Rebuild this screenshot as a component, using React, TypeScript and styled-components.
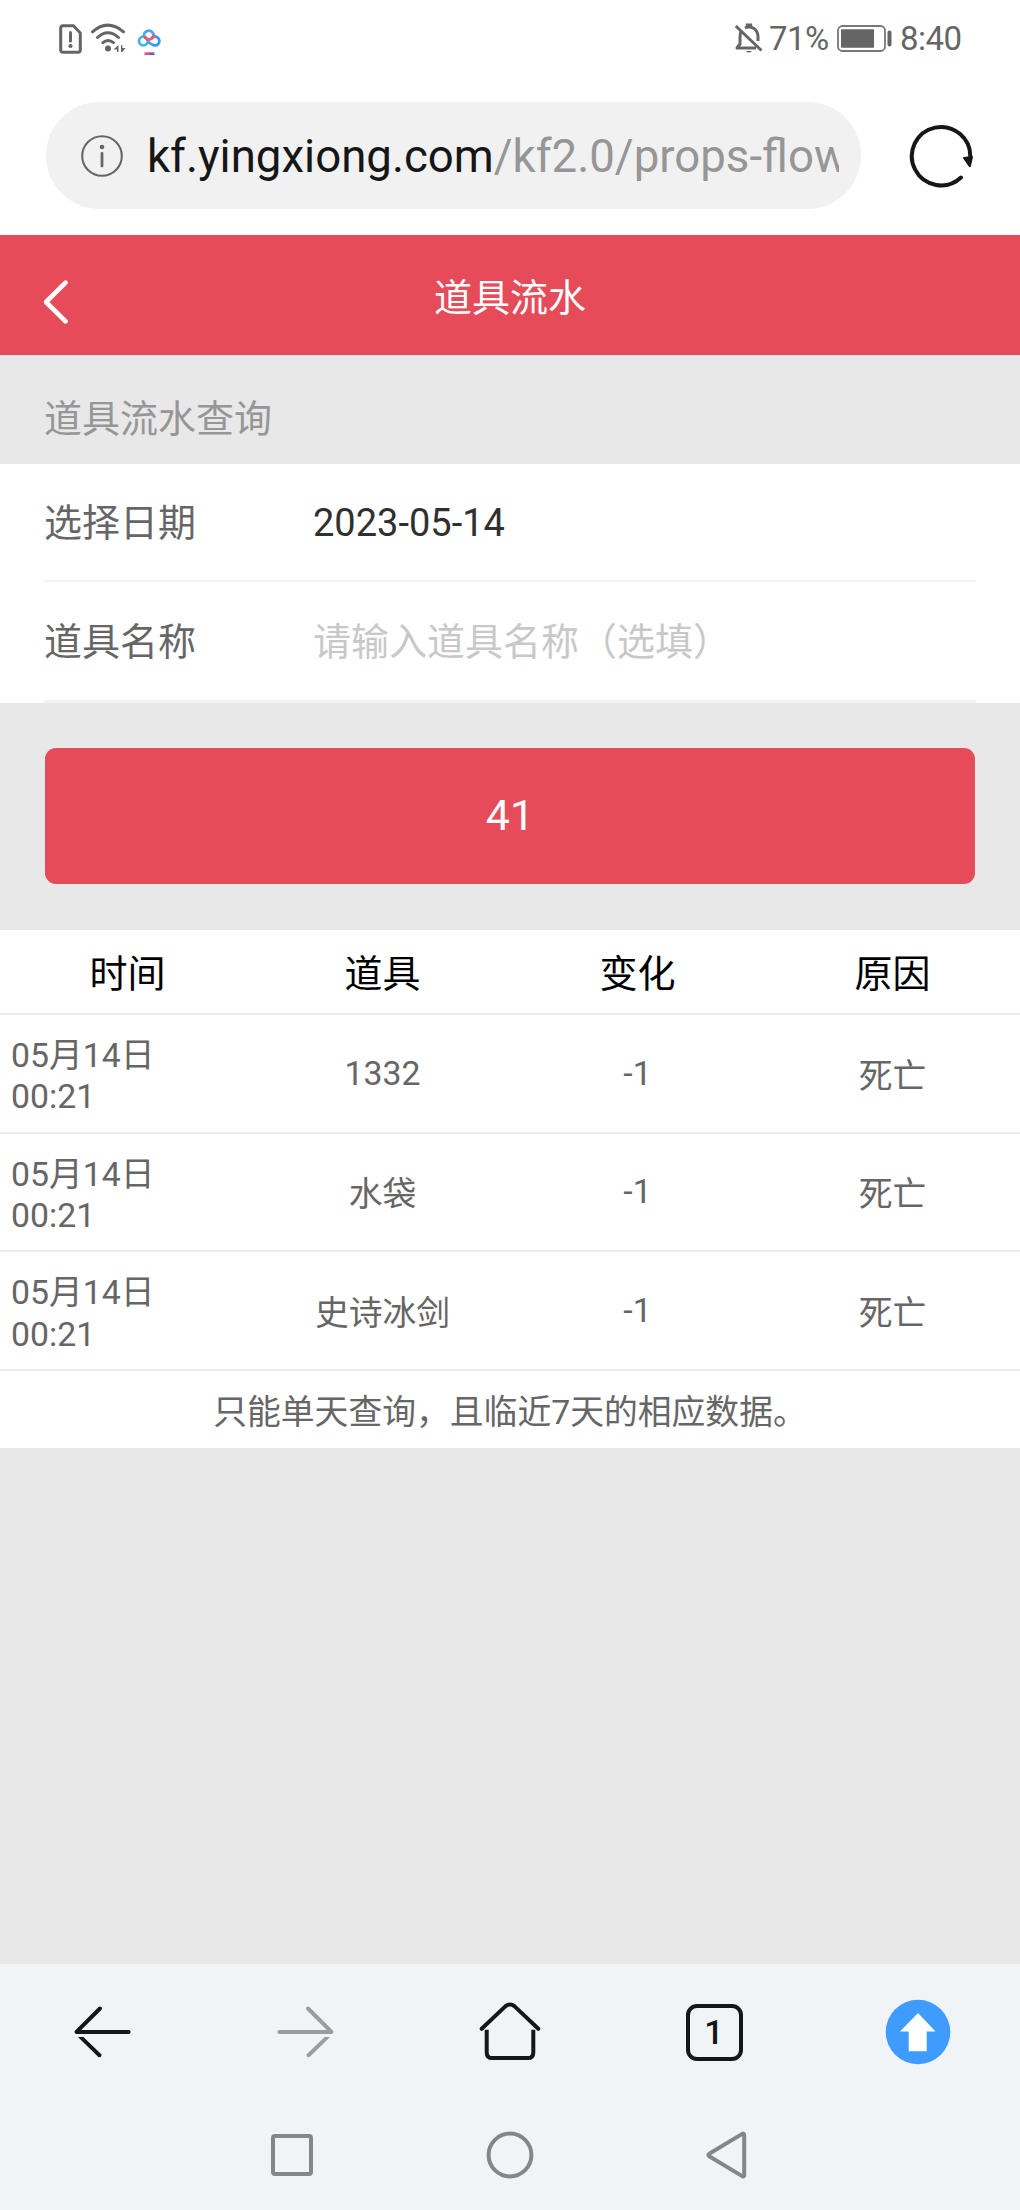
import React from "react";
import styled, { createGlobalStyle } from "styled-components";

const GlobalStyle = createGlobalStyle`
  *, *::before, *::after { box-sizing: border-box; }
  body {
    margin: 0;
    background: #e8e8e8;
    font-family: Roboto, "Noto Sans CJK SC", sans-serif;
    font-weight: 400;
  }
`;

const RED = "#e64b5a";

const Screen = styled.div`
  width: 1020px;
  height: 2210px;
  display: flex;
  flex-direction: column;
  overflow: hidden;
  background: #e8e8e8;
`;

const StatusBar = styled.header`
  height: 77px;
  padding: 0 59px;
  display: flex;
  justify-content: space-between;
  background: #fff;
  color: #656565;
  font-size: 33px;
  line-height: 77px;
`;

const StatusGroup = styled.div`
  display: flex;
  align-items: center;

  svg { flex: none; display: block; }
`;

const StatusText = styled.span<{ $width: number }>`
  width: ${(p) => p.$width}px;
  white-space: nowrap;
  letter-spacing: -0.5px;
`;

const AddressBar = styled.div`
  height: 158px;
  padding: 25px 45px 0 46px;
  display: flex;
  align-items: flex-start;
  justify-content: space-between;
  background: #fff;
`;

const AddressField = styled.div`
  width: 815px;
  height: 107px;
  padding: 0 22px 0 35px;
  display: flex;
  align-items: center;
  gap: 24px;
  border-radius: 54px;
  background: #f1f1f1;

  svg { flex: none; display: block; }
`;

const Url = styled.div`
  flex: 1;
  min-width: 0;
  overflow: hidden;
  white-space: nowrap;
  padding-top: 3px;
  font-size: 45.6px;
  line-height: 70px;
  color: #969696;
`;

const Host = styled.span`
  color: #161616;
`;

const ReloadButton = styled.button`
  width: 68px;
  height: 107px;
  padding: 0;
  border: 0;
  background: none;
  display: flex;
  align-items: center;
  justify-content: center;
`;

const TitleBar = styled.div`
  height: 120px;
  padding: 0 40px;
  display: grid;
  grid-template-columns: 60px 1fr 60px;
  align-items: center;
  background: ${RED};
  color: #fff;
`;

const BackButton = styled.button`
  padding: 14px 0 0;
  border: 0;
  background: none;
  display: flex;
`;

const PageTitle = styled.h1`
  margin: 0;
  padding-top: 6px;
  text-align: center;
  font-size: 38px;
  font-weight: 400;
  line-height: 50px;
`;

const SectionTitle = styled.h2`
  height: 109px;
  margin: 0;
  padding: 20px 44px 0;
  font-size: 38px;
  font-weight: 400;
  line-height: 89px;
  color: #969696;
`;

const Form = styled.form`
  height: 239px;
  padding: 0 44px;
  background: #fff;
`;

const Field = styled.label`
  height: 118px;
  padding-top: 2px;
  display: grid;
  grid-template-columns: 269px 1fr;
  align-items: center;
  border-bottom: 2px solid #f2f2f2;
  font-size: 38px;
  color: #666;

  & + & {
    height: 121px;
    padding-top: 1px;
    border-bottom-width: 3px;
  }
`;

const FieldLabel = styled.span`
  line-height: 56px;
`;

const Input = styled.input`
  width: 100%;
  padding: 0;
  border: 0;
  outline: 0;
  background: none;
  font: inherit;
  line-height: 56px;
  height: 56px;
  color: #303030;

  &::placeholder { color: #c8c8c8; opacity: 1; }
`;

const SubmitArea = styled.div`
  height: 227px;
  padding: 45px;
`;

const SubmitButton = styled.button`
  width: 100%;
  height: 136px;
  padding: 0 0 2px;
  border: 0;
  border-radius: 11px;
  background: ${RED};
  color: #fff;
  font-family: inherit;
  font-size: 43px;
`;

const Table = styled.section`
  height: 518px;
  background: #fff;
`;

const Row = styled.div<{ $head?: boolean }>`
  height: ${(p) => (p.$head ? 85 : 118.7)}px;
  display: grid;
  grid-template-columns: repeat(4, 255px);
  align-items: center;
  border-bottom: 2px solid #ebebeb;
  font-size: ${(p) => (p.$head ? 38 : 33.8)}px;
  line-height: ${(p) => (p.$head ? 42 : 41.5)}px;
  color: ${(p) => (p.$head ? "#000" : "#666")};
`;

const Cell = styled.div<{ $drop?: number }>`
  padding-top: ${(p) => p.$drop ?? 0}px;
  text-align: center;
`;

const TimeCell = styled.div`
  padding: 6px 80px 0 11px;
`;

const Notice = styled.p`
  margin: 0;
  padding: 4px 0 0;
  text-align: center;
  font-size: 33.8px;
  line-height: 76px;
  color: #666;
`;

const Spacer = styled.div`
  flex: 1;
`;

const BottomArea = styled.footer`
  height: 246px;
  background: #f1f4f7;
`;

const Toolbar = styled.nav`
  height: 136px;
  display: grid;
  grid-template-columns: repeat(5, 1fr);
  place-items: center;
`;

const TabCount = styled.div`
  width: 57px;
  height: 57px;
  display: flex;
  align-items: center;
  justify-content: center;
  border: 4px solid #161616;
  border-radius: 11px;
  font-size: 34px;
  font-weight: 500;
  line-height: 49px;
  color: #161616;
`;

const SystemNav = styled.nav`
  height: 110px;
  display: flex;
  align-items: center;
  justify-content: center;
  gap: 170px;
`;

function SimAlertIcon() {
  return (
    <svg width="23" height="30" viewBox="0 0 23 30" fill="none" stroke="#656565" strokeWidth="3">
      <path d="M4 1.7H14.5L21.3 9V26Q21.3 28.2 19 28.2H4Q1.7 28.2 1.7 26V4Q1.7 1.7 4 1.7Z" strokeLinejoin="round" />
      <path d="M11.5 8.5V17" strokeLinecap="round" />
      <circle cx="11.5" cy="22" r="2.1" fill="#656565" stroke="none" />
    </svg>
  );
}

function WifiIcon() {
  return (
    <svg width="36" height="30" viewBox="0 0 36 30" fill="none" stroke="#656565" strokeWidth="3" strokeLinecap="round" style={{ marginLeft: 8, marginTop: -1 }}>
      <path d="M2.5 8.8Q17.5 -4.5 33.5 8.8" />
      <path d="M7.5 14.5Q17.8 5 28.5 14.5" />
      <path d="M12.8 19.6Q18 15.3 23.5 19.6" />
      <circle cx="18" cy="25.5" r="3" fill="#656565" stroke="none" />
      <path d="M28.5 22V29H27V26.5H23.5ZM31 22V29H32.3L35.5 25H32.3V22Z" fill="#656565" stroke="none" />
    </svg>
  );
}

function CloudIcon() {
  return (
    <svg width="24" height="28" viewBox="0 0 24 28" fill="none" strokeWidth="2.8" style={{ marginLeft: 11, marginTop: 7 }}>
      <circle cx="6.4" cy="13" r="4.4" stroke="#43b3e8" />
      <path d="M14.6 10.2A4.4 4.4 0 1 1 15 16.3" stroke="#3c9ae6" />
      <path d="M7 8.8A4.9 4.9 0 1 1 16.6 8.2" stroke="#4aa8ee" />
      <path d="M7.2 8Q9 12 12 11.6T17 8L18.4 8.6" stroke="#ea5a72" />
      <path d="M10.5 13.5L15 16.6" stroke="#43a3e8" />
      <path d="M7.5 25.7H13" stroke="#d9567e" />
      <path d="M12.5 25.7H17.5" stroke="#6765bb" />
    </svg>
  );
}

function MutedBellIcon() {
  return (
    <svg width="28" height="31" viewBox="0 0 28 31" fill="none" stroke="#656565" strokeWidth="3" style={{ marginRight: 6, marginTop: -1 }}>
      <path d="M6 8.5Q5 11 5 15V21L2 25H21" strokeLinejoin="round" />
      <path d="M10 5Q14 2.8 18.5 5.2Q23 8 23 14V18" />
      <path d="M12 4V1.8H16V4" strokeWidth="2.4" />
      <path d="M.8 3L26.5 27.5" />
      <path d="M10.5 28H17Q14 31 10.5 28Z" fill="#656565" stroke="none" />
    </svg>
  );
}

function BatteryIcon() {
  return (
    <svg width="56" height="27" viewBox="0 0 56 27" style={{ marginRight: 7 }}>
      <rect x="1" y="1" width="47" height="25" rx="4.5" fill="none" stroke="#777" strokeWidth="1.8" />
      <rect x="4" y="4.3" width="33" height="18.4" rx="1" fill="#656565" />
      <rect x="50.5" y="5.5" width="4" height="16" rx="2" fill="#656565" />
    </svg>
  );
}

function InfoIcon() {
  return (
    <svg width="42" height="42" viewBox="0 0 42 42" fill="none" stroke="#666" style={{ marginTop: 1 }}>
      <circle cx="21" cy="21" r="19.8" strokeWidth="2.1" />
      <circle cx="21" cy="12" r="2.3" fill="#666" stroke="none" />
      <path d="M21 18.5V31" strokeWidth="2.8" strokeLinecap="round" />
    </svg>
  );
}

function ReloadIcon() {
  return (
    <svg width="68" height="68" viewBox="-34 -34 68 68" fill="none" stroke="#161616">
      <path d="M20 21.5A29.2 29.2 0 1 1 29.2 2" strokeWidth="4" strokeLinecap="round" />
      <path d="M23 2L31 1L28.8 10.3Z" fill="#161616" strokeWidth="2" strokeLinejoin="round" />
    </svg>
  );
}

function ChevronIcon() {
  return (
    <svg width="32" height="48" viewBox="0 0 32 48" fill="none" stroke="#fff" strokeWidth="4.6" strokeLinecap="round" strokeLinejoin="round">
      <path d="M25.6 4.6L6 24L25.6 43.4" />
    </svg>
  );
}

function ArrowIcon({ forward }: { forward?: boolean }) {
  const color = forward ? "#999da1" : "#161616";
  return (
    <svg width="60" height="60" viewBox="0 0 60 60" fill="none" stroke={color} strokeWidth="4" strokeLinecap="round" strokeLinejoin="round">
      <g transform={forward ? "translate(60 0) scale(-1 1)" : undefined}>
        <path d="M28 6.5L4.5 29.9H56.6" />
        <path d="M5.9 35H11.4L29.3 52.3Q30 55.5 26.6 55.3Z" fill={color} stroke="none" />
      </g>
    </svg>
  );
}

function HomeIcon() {
  return (
    <svg width="64" height="60" viewBox="0 0 64 60" fill="none" stroke="#161616" strokeWidth="4">
      <path d="M3.7 26.8L27.3 4.4Q32 .5 36.7 4.4L60.3 26.8" strokeLinecap="round" />
      <path d="M8.7 27.7V50.4Q8.7 56 14.3 56H49.7Q55.3 56 55.3 50.4V27.7" />
    </svg>
  );
}

function UploadIcon() {
  return (
    <svg width="66" height="66" viewBox="0 0 66 66">
      <circle cx="33" cy="33" r="32.3" fill="#409bff" />
      <path d="M33 14L50.5 32.4H41.7V52.3H23.7V32.4H15Z" fill="#fff" />
    </svg>
  );
}

function RecentsIcon() {
  return (
    <svg width="48" height="48" viewBox="0 0 48 48" fill="none" stroke="#868686" strokeWidth="4">
      <rect x="5" y="5" width="38" height="38" rx="2" />
    </svg>
  );
}

function CircleIcon() {
  return (
    <svg width="48" height="48" viewBox="0 0 48 48" fill="none" stroke="#868686" strokeWidth="4">
      <circle cx="24" cy="24" r="21.4" />
    </svg>
  );
}

function TriangleIcon() {
  return (
    <svg width="48" height="48" viewBox="-2 0 48 48" fill="none" stroke="#868686" strokeWidth="4" strokeLinejoin="round">
      <path d="M36.2 2.9Q38.2 1.9 38.2 4V44Q38.2 46.1 36.2 45.1L3.2 25.2Q1.4 24 3.2 22.8Z" />
    </svg>
  );
}

const records = [
  { time: "05月14日 00:21", item: "1332", change: "-1", reason: "死亡" },
  { time: "05月14日 00:21", item: "水袋", change: "-1", reason: "死亡" },
  { time: "05月14日 00:21", item: "史诗冰剑", change: "-1", reason: "死亡" },
];

const isLatin = (text: string) => /^[\d-]+$/.test(text);

export default function App() {
  return (
    <>
      <GlobalStyle />
      <Screen>
        <StatusBar>
          <StatusGroup>
            <SimAlertIcon />
            <WifiIcon />
            <CloudIcon />
          </StatusGroup>
          <StatusGroup>
            <MutedBellIcon />
            <StatusText $width={68}>71%</StatusText>
            <BatteryIcon />
            <StatusText $width={61}>8:40</StatusText>
          </StatusGroup>
        </StatusBar>
        <AddressBar>
          <AddressField>
            <InfoIcon />
            <Url>
              <Host>kf.yingxiong.com</Host>/kf2.0/props-flow
            </Url>
          </AddressField>
          <ReloadButton type="button">
            <ReloadIcon />
          </ReloadButton>
        </AddressBar>
        <TitleBar>
          <BackButton type="button">
            <ChevronIcon />
          </BackButton>
          <PageTitle>道具流水</PageTitle>
        </TitleBar>
        <SectionTitle>道具流水查询</SectionTitle>
        <Form>
          <Field>
            <FieldLabel>选择日期</FieldLabel>
            <Input defaultValue="2023-05-14" />
          </Field>
          <Field>
            <FieldLabel>道具名称</FieldLabel>
            <Input placeholder="请输入道具名称（选填）" />
          </Field>
        </Form>
        <SubmitArea>
          <SubmitButton type="button">41</SubmitButton>
        </SubmitArea>
        <Table>
          <Row $head>
            {["时间", "道具", "变化", "原因"].map((name) => (
              <Cell key={name} $drop={4}>{name}</Cell>
            ))}
          </Row>
          {records.map((r, i) => (
            <Row key={i}>
              <TimeCell>{r.time}</TimeCell>
              <Cell $drop={isLatin(r.item) ? 0 : 6}>{r.item}</Cell>
              <Cell>{r.change}</Cell>
              <Cell $drop={6}>{r.reason}</Cell>
            </Row>
          ))}
          <Notice>只能单天查询，且临近7天的相应数据。</Notice>
        </Table>
        <Spacer />
        <BottomArea>
          <Toolbar>
            <ArrowIcon />
            <ArrowIcon forward />
            <HomeIcon />
            <TabCount>1</TabCount>
            <UploadIcon />
          </Toolbar>
          <SystemNav>
            <RecentsIcon />
            <CircleIcon />
            <TriangleIcon />
          </SystemNav>
        </BottomArea>
      </Screen>
    </>
  );
}
